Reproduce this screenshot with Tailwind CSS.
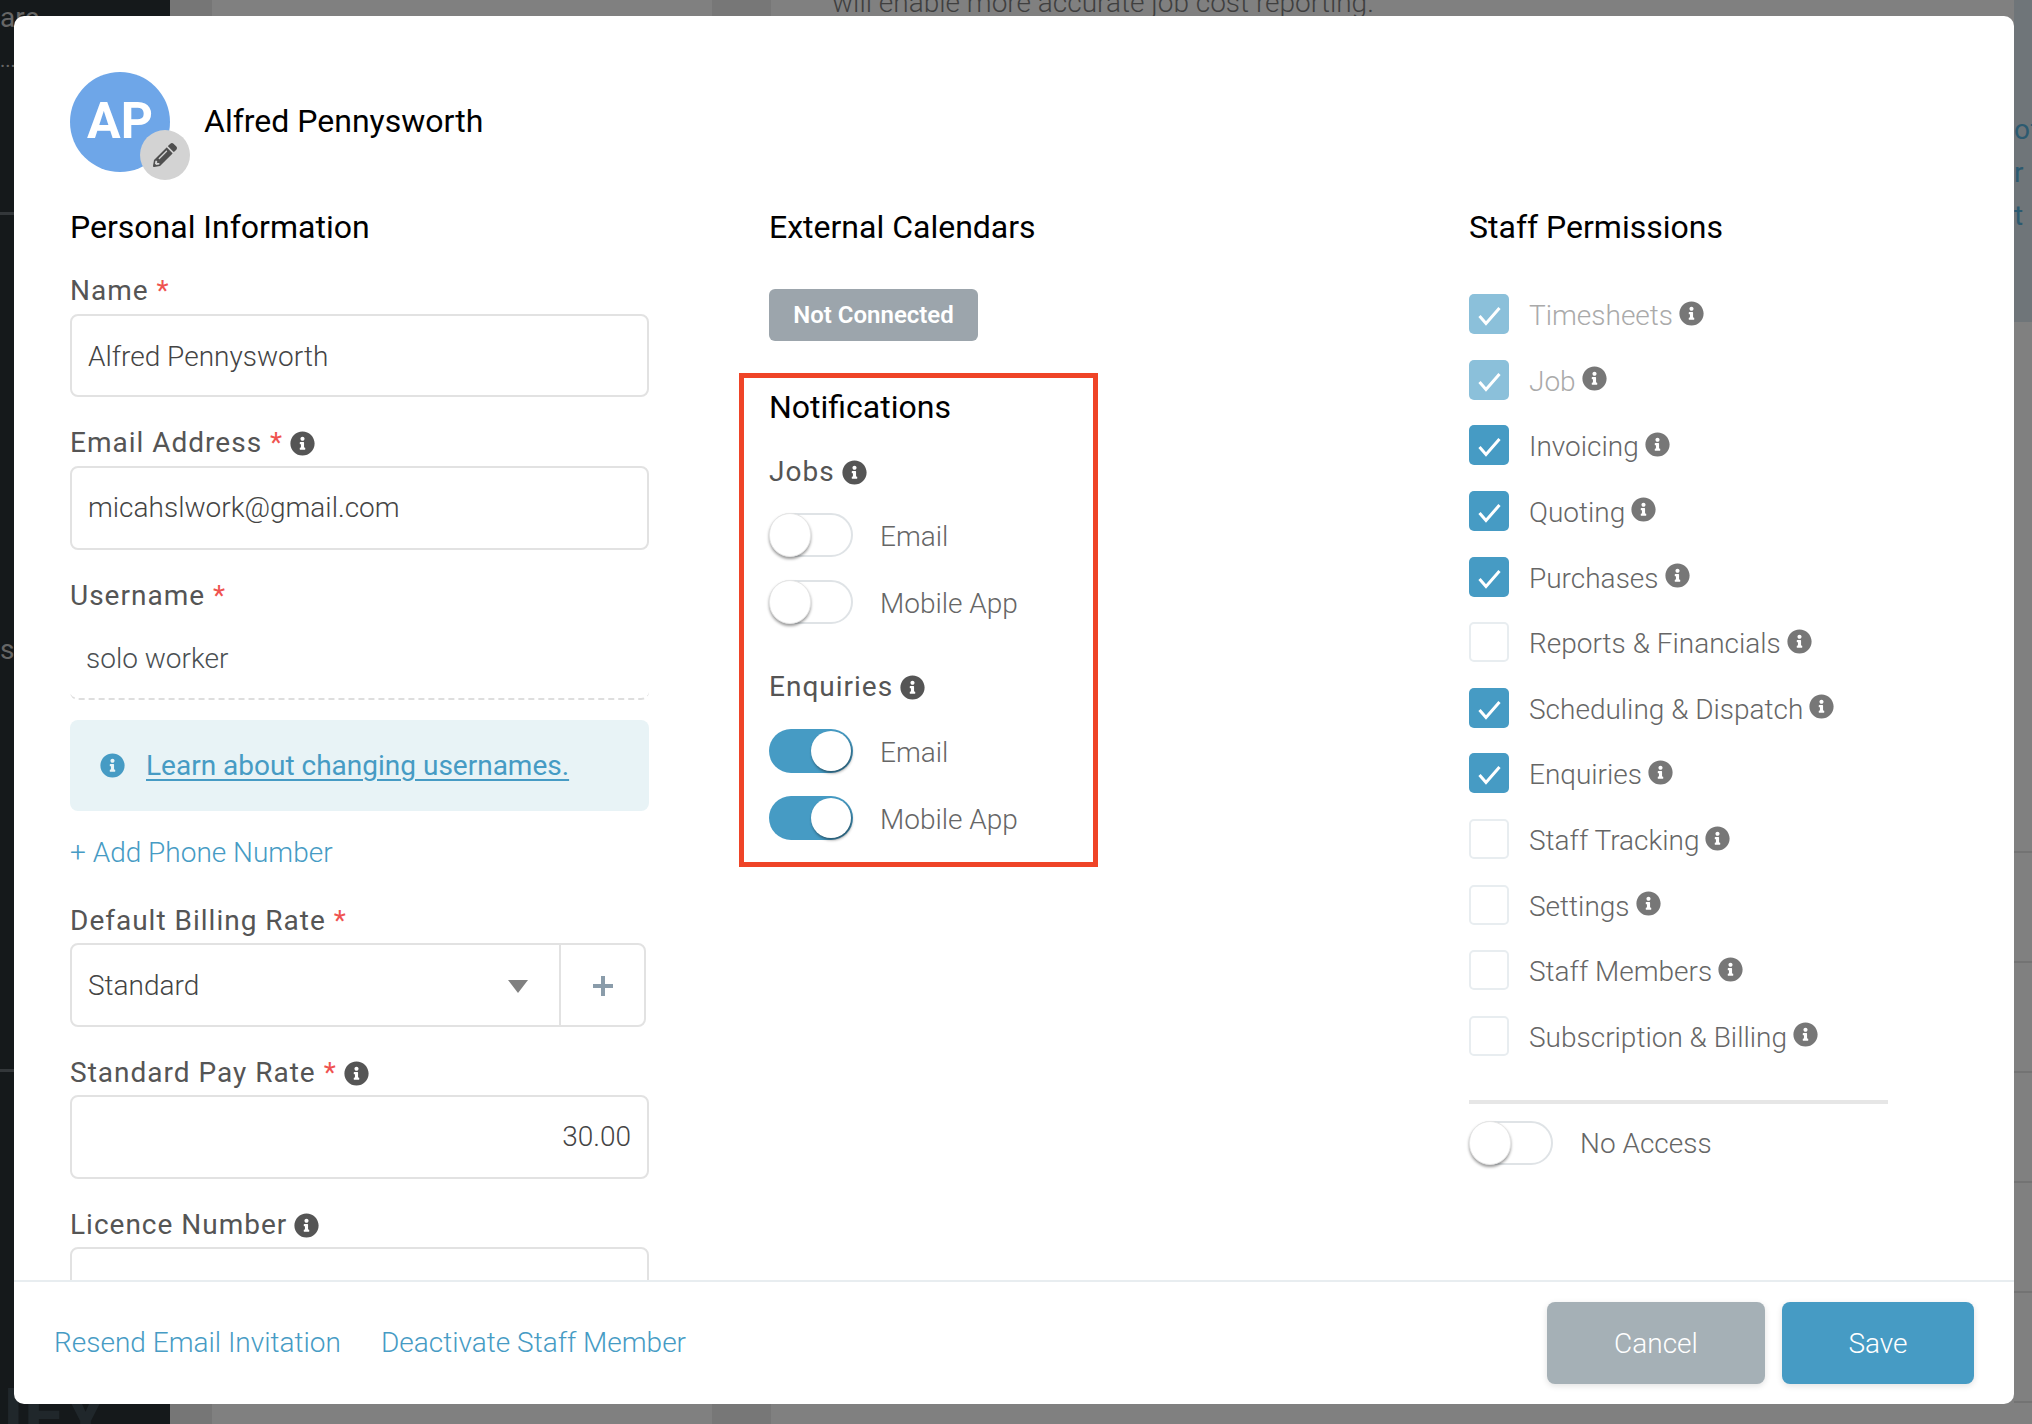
<!doctype html>
<html>
<head>
<meta charset="utf-8">
<script src="https://cdn.jsdelivr.net/npm/@tailwindcss/browser@4"></script>
</head>
<body class="m-0 overflow-hidden font-['Roboto',sans-serif]">
<svg class="hidden"><symbol id="i" viewBox="0 0 512 512"><path d="M256 8C119 8 8 119 8 256s111 248 248 248 248-111 248-248S393 8 256 8zm0 110c23.196 0 42 18.804 42 42s-18.804 42-42 42-42-18.804-42-42 18.804-42 42-42zm56 254c0 6.627-5.373 12-12 12h-88c-6.627 0-12-5.373-12-12v-24c0-6.627 5.373-12 12-12h12v-64h-12c-6.627 0-12-5.373-12-12v-24c0-6.627 5.373-12 12-12h64c6.627 0 12 5.373 12 12v100h12c6.627 0 12 5.373 12 12v24z"/></symbol><symbol id="c" viewBox="0 0 40 40"><path d="M10.5 22l6.5 7.5L30.5 14" fill="none" stroke="#fff" stroke-width="3"/></symbol></svg>

<div class="relative w-[2032px] h-[1424px] flex bg-[#808080] overflow-hidden">
  <div class="w-[170px] h-full bg-[#15191b] text-[#666] text-[28px] relative overflow-hidden">
    <span class="absolute left-0 top-[2px] leading-[32px]">are</span>
    <span class="absolute left-0 top-[44px] leading-[32px] text-[20px]">...</span>
    <div class="absolute left-0 top-[212px] w-full h-[3px] bg-[#33373a]"></div>
    <span class="absolute left-0 top-[634px] leading-[32px]">s</span>
    <div class="absolute left-0 top-[1069px] w-full h-[3px] bg-[#33373a]"></div>
    <span class="absolute left-[-44px] top-[1376px] text-[72px] leading-[80px] font-bold text-[#20272b] whitespace-nowrap">DIFY</span>
  </div>
  <div class="w-[42px] h-full bg-[#767676]"></div>
  <div class="w-[500px] h-full"></div>
  <div class="w-[59px] h-full bg-[#777777]"></div>
  <div class="flex-1 h-full relative overflow-hidden"><p class="absolute left-[61px] top-[-13px] text-[28px] leading-[32px] font-light text-[#3f3f3f] whitespace-nowrap">will enable more accurate job cost reporting.</p>
    <div class="absolute right-0 top-0 w-[18px] h-[322px] bg-[#6f7579]"></div>
    <div class="absolute left-[1243px] top-[108px] text-[28px] leading-[43px] text-[#2c5a70] whitespace-nowrap">of<br>r l<br>t L</div>
    <div class="absolute left-[1243px] top-[851px] w-[18px] h-[2px] bg-[#737373]"></div>
    <div class="absolute left-[1243px] top-[961px] w-[18px] h-[2px] bg-[#737373]"></div>
    <div class="absolute left-[1243px] top-[1071px] w-[18px] h-[2px] bg-[#737373]"></div>
    <div class="absolute left-[1243px] top-[1181px] w-[18px] h-[2px] bg-[#737373]"></div>
    <div class="absolute left-[1243px] top-[1291px] w-[18px] h-[2px] bg-[#737373]"></div>
    <div class="absolute left-[1243px] top-[1401px] w-[18px] h-[2px] bg-[#737373]"></div>
  </div>

  <div class="absolute left-[14px] top-[16px] w-[2000px] h-[1388px] bg-white rounded-[10px] flex flex-col overflow-hidden">
    <div class="flex-1 min-h-0 overflow-hidden pl-[56px] pt-[56px]">
      <div class="flex items-start">
        <div class="relative w-[100px] h-[100px] rounded-full bg-[#6ea6e8] flex items-center justify-center text-white text-[50px] font-bold leading-none pb-[2px]">AP
          <div class="absolute left-[70px] top-[58px] w-[50px] h-[50px] rounded-full bg-[#d3d3d3] flex items-center justify-center">
            <svg width="24" height="24" viewBox="0 0 512 512" fill="#4f4f4f"><path d="M497.9 142.1l-46.1 46.1c-4.7 4.7-12.3 4.7-17 0l-111-111c-4.7-4.7-4.7-12.3 0-17l46.1-46.1c18.7-18.7 49.1-18.7 67.9 0l60.1 60.1c18.8 18.7 18.8 49.1 0 67.9zM284.2 99.8L21.6 362.4.4 483.9c-2.9 16.4 11.4 30.6 27.8 27.8l121.5-21.3 262.6-262.6c4.7-4.7 4.7-12.3 0-17l-111-111c-4.8-4.7-12.4-4.7-17.1 0zM124.1 339.9c-5.5-5.5-5.5-14.3 0-19.8l154-154c5.5-5.5 14.3-5.5 19.8 0s5.5 14.3 0 19.8l-154 154c-5.5 5.5-14.3 5.5-19.8 0zM88 424h48v36.3l-64.5 11.3-31.1-31.1L51.7 376H88v48z"/></svg>
          </div>
        </div>
        <div class="ml-[34px] mt-[29px] text-[32px] leading-[40px] text-black">Alfred Pennysworth</div>
      </div>

      <div class="flex mt-[35px]">
        <!-- left -->
        <div class="w-[579px] shrink-0">
          <h2 class="text-[32px] leading-[40px] text-black">Personal Information</h2>
          <div class="mt-[26px] text-[28px] leading-[36px] tracking-[1px] text-[#555]">Name <span class="text-[#ef5350]">*</span></div>
          <div class="mt-[5px] h-[83px] border-2 border-[#e2e2e2] rounded-[8px] px-[16px] pt-[2px] flex items-center text-[28px] font-light text-[#444]">Alfred Pennysworth</div>
          <div class="mt-[28px] text-[28px] leading-[36px] tracking-[1px] text-[#555] flex items-center">Email Address <span class="text-[#ef5350] ml-[8px]">*</span><svg class="ml-[7px] w-[25px] h-[25px] fill-[#555]"><use href="#i"/></svg></div>
          <div class="mt-[5px] h-[84px] border-2 border-[#e2e2e2] rounded-[8px] px-[16px] flex items-center text-[28px] font-light text-[#444]">micahslwork@gmail.com</div>
          <div class="mt-[28px] text-[28px] leading-[36px] tracking-[1px] text-[#555]">Username <span class="text-[#ef5350]">*</span></div>
          <div class="mt-[6px] h-[80px] border-b-2 border-dashed border-[#dedede] rounded-b-[8px] px-[16px] flex items-center text-[28px] font-light text-[#4a4f52]">solo worker</div>
          <div class="mt-[20px] h-[91px] bg-[#e8f3f6] rounded-[8px] flex items-center pl-[30px]">
            <svg class="w-[25px] h-[25px] fill-[#469bc4] mr-[21px]"><use href="#i"/></svg>
            <a class="text-[28px] text-[#469bc4] underline underline-offset-[4px] decoration-2">Learn about changing usernames.</a>
          </div>
          <div class="mt-[22px] text-[28px] leading-[40px] font-light text-[#469bc4]">+ Add Phone Number</div>
          <div class="mt-[30px] text-[28px] leading-[36px] tracking-[1px] text-[#555]">Default Billing Rate <span class="text-[#ef5350]">*</span></div>
          <div class="mt-[4px] w-[576px] h-[84px] border-2 border-[#e2e2e2] rounded-[8px] flex">
            <div class="w-[489px] border-r-2 border-[#e2e2e2] pl-[16px] pr-[31px] flex items-center justify-between text-[28px] font-light text-[#444]"><span class="mt-[1px]">Standard</span><span class="mt-[3px] w-0 h-0 border-x-[10px] border-x-transparent border-t-[13px] border-t-[#808080]"></span></div>
            <div class="flex-1 flex items-center justify-center"><svg class="mt-[2px]" width="20" height="20" viewBox="0 0 20 20"><path d="M8 0h4v8h8v4h-8v8H8v-8H0V8h8z" fill="#8a9caa"/></svg></div>
          </div>
          <div class="mt-[28px] text-[28px] leading-[36px] tracking-[1px] text-[#555] flex items-center">Standard Pay Rate <span class="text-[#ef5350] ml-[8px]">*</span><svg class="ml-[7px] w-[25px] h-[25px] fill-[#555]"><use href="#i"/></svg></div>
          <div class="mt-[4px] h-[84px] border-2 border-[#e2e2e2] rounded-[8px] px-[16px] flex items-center justify-end text-[28px] font-light text-[#444]">30.00</div>
          <div class="mt-[28px] text-[28px] leading-[36px] tracking-[1px] text-[#555] flex items-center">Licence Number<svg class="ml-[7px] w-[25px] h-[25px] fill-[#555]"><use href="#i"/></svg></div>
          <div class="mt-[4px] h-[84px] border-2 border-[#e2e2e2] rounded-[8px]"></div>
        </div>

        <!-- middle -->
        <div class="w-[820px] shrink-0 pl-[120px]">
          <h2 class="text-[32px] leading-[40px] text-black">External Calendars</h2>
          <div class="mt-[42px] w-[209px] h-[52px] bg-[#9ca5ac] rounded-[6px] flex items-center justify-center text-white text-[24px] font-semibold">Not Connected</div>
          <div class="-ml-[30px] mt-[32px] w-[359px] h-[494px] border-[5px] border-[#ef4427] pl-[25px] pt-[9px]">
            <h2 class="text-[32px] leading-[40px] text-black">Notifications</h2>
            <div class="mt-[27px] text-[28px] leading-[36px] tracking-[1px] text-[#555] flex items-center">Jobs<svg class="ml-[7px] w-[25px] h-[25px] fill-[#555]"><use href="#i"/></svg></div>
            <div class="mt-[23px] flex items-center h-[44px] text-[28px] font-light text-[#666]"><span class="w-[84px] h-[44px] rounded-full border-2 border-[#dfe3e6] bg-white relative shrink-0"><span class="absolute left-[-2px] top-[-2px] w-[42px] h-[44px] rounded-full bg-white shadow-[0_2px_3px_rgba(0,0,0,0.4)] border border-[#e6e6e6]"></span></span><span class="ml-[27px] mt-[4px]">Email</span></div>
            <div class="mt-[23px] flex items-center h-[44px] text-[28px] font-light text-[#666]"><span class="w-[84px] h-[44px] rounded-full border-2 border-[#dfe3e6] bg-white relative shrink-0"><span class="absolute left-[-2px] top-[-2px] w-[42px] h-[44px] rounded-full bg-white shadow-[0_2px_3px_rgba(0,0,0,0.4)] border border-[#e6e6e6]"></span></span><span class="ml-[27px] mt-[4px]">Mobile App</span></div>
            <div class="mt-[45px] text-[28px] leading-[36px] tracking-[1px] text-[#555] flex items-center">Enquiries<svg class="ml-[7px] w-[25px] h-[25px] fill-[#555]"><use href="#i"/></svg></div>
            <div class="mt-[24px] flex items-center h-[44px] text-[28px] font-light text-[#666]"><span class="w-[84px] h-[44px] rounded-full bg-[#469bc4] relative shrink-0"><span class="absolute right-[2px] top-[2px] w-[40px] h-[40px] rounded-full bg-white shadow-[1px_2px_3px_rgba(0,0,0,0.45)]"></span></span><span class="ml-[27px] mt-[4px]">Email</span></div>
            <div class="mt-[23px] flex items-center h-[44px] text-[28px] font-light text-[#666]"><span class="w-[84px] h-[44px] rounded-full bg-[#469bc4] relative shrink-0"><span class="absolute right-[2px] top-[2px] w-[40px] h-[40px] rounded-full bg-white shadow-[1px_2px_3px_rgba(0,0,0,0.45)]"></span></span><span class="ml-[27px] mt-[3px]">Mobile App</span></div>
          </div>
        </div>

        <!-- right -->
        <div class="flex-1">
          <h2 class="text-[32px] leading-[40px] text-black">Staff Permissions</h2>
          <div class="mt-[47px] grid auto-rows-[40px] gap-y-[25.64px] text-[28px] font-light text-[#666]">
            <div class="flex items-center"><span class="w-[40px] h-[40px] rounded-[5px] bg-[#8bc0da] shrink-0"><svg class="w-[40px] h-[40px]"><use href="#c"/></svg></span><span class="ml-[20px] mt-[4px] text-[#aaa]">Timesheets</span><svg class="ml-[6px] -mt-[2px] w-[25px] h-[25px] fill-[#777]"><use href="#i"/></svg></div>
            <div class="flex items-center"><span class="w-[40px] h-[40px] rounded-[5px] bg-[#8bc0da] shrink-0"><svg class="w-[40px] h-[40px]"><use href="#c"/></svg></span><span class="ml-[20px] mt-[4px] text-[#aaa]">Job</span><svg class="ml-[6px] -mt-[2px] w-[25px] h-[25px] fill-[#777]"><use href="#i"/></svg></div>
            <div class="flex items-center"><span class="w-[40px] h-[40px] rounded-[5px] bg-[#469bc4] shrink-0"><svg class="w-[40px] h-[40px]"><use href="#c"/></svg></span><span class="ml-[20px] mt-[4px]">Invoicing</span><svg class="ml-[6px] -mt-[2px] w-[25px] h-[25px] fill-[#777]"><use href="#i"/></svg></div>
            <div class="flex items-center"><span class="w-[40px] h-[40px] rounded-[5px] bg-[#469bc4] shrink-0"><svg class="w-[40px] h-[40px]"><use href="#c"/></svg></span><span class="ml-[20px] mt-[4px]">Quoting</span><svg class="ml-[6px] -mt-[2px] w-[25px] h-[25px] fill-[#777]"><use href="#i"/></svg></div>
            <div class="flex items-center"><span class="w-[40px] h-[40px] rounded-[5px] bg-[#469bc4] shrink-0"><svg class="w-[40px] h-[40px]"><use href="#c"/></svg></span><span class="ml-[20px] mt-[4px]">Purchases</span><svg class="ml-[6px] -mt-[2px] w-[25px] h-[25px] fill-[#777]"><use href="#i"/></svg></div>
            <div class="flex items-center"><span class="w-[40px] h-[40px] rounded-[5px] border-2 border-[#e8edf0] shrink-0"></span><span class="ml-[20px] mt-[4px]">Reports &amp; Financials</span><svg class="ml-[6px] -mt-[2px] w-[25px] h-[25px] fill-[#777]"><use href="#i"/></svg></div>
            <div class="flex items-center"><span class="w-[40px] h-[40px] rounded-[5px] bg-[#469bc4] shrink-0"><svg class="w-[40px] h-[40px]"><use href="#c"/></svg></span><span class="ml-[20px] mt-[4px]">Scheduling &amp; Dispatch</span><svg class="ml-[6px] -mt-[2px] w-[25px] h-[25px] fill-[#777]"><use href="#i"/></svg></div>
            <div class="flex items-center"><span class="w-[40px] h-[40px] rounded-[5px] bg-[#469bc4] shrink-0"><svg class="w-[40px] h-[40px]"><use href="#c"/></svg></span><span class="ml-[20px] mt-[4px]">Enquiries</span><svg class="ml-[6px] -mt-[2px] w-[25px] h-[25px] fill-[#777]"><use href="#i"/></svg></div>
            <div class="flex items-center"><span class="w-[40px] h-[40px] rounded-[5px] border-2 border-[#e8edf0] shrink-0"></span><span class="ml-[20px] mt-[4px]">Staff Tracking</span><svg class="ml-[6px] -mt-[2px] w-[25px] h-[25px] fill-[#777]"><use href="#i"/></svg></div>
            <div class="flex items-center"><span class="w-[40px] h-[40px] rounded-[5px] border-2 border-[#e8edf0] shrink-0"></span><span class="ml-[20px] mt-[4px]">Settings</span><svg class="ml-[6px] -mt-[2px] w-[25px] h-[25px] fill-[#777]"><use href="#i"/></svg></div>
            <div class="flex items-center"><span class="w-[40px] h-[40px] rounded-[5px] border-2 border-[#e8edf0] shrink-0"></span><span class="ml-[20px] mt-[4px]">Staff Members</span><svg class="ml-[6px] -mt-[2px] w-[25px] h-[25px] fill-[#777]"><use href="#i"/></svg></div>
            <div class="flex items-center"><span class="w-[40px] h-[40px] rounded-[5px] border-2 border-[#e8edf0] shrink-0"></span><span class="ml-[20px] mt-[4px]">Subscription &amp; Billing</span><svg class="ml-[6px] -mt-[2px] w-[25px] h-[25px] fill-[#777]"><use href="#i"/></svg></div>
          </div>
          <div class="mt-[44px] w-[419px] h-[4px] bg-[#e6e6e6]"></div>
          <div class="mt-[17px] flex items-center h-[44px] text-[28px] font-light text-[#666]"><span class="w-[84px] h-[44px] rounded-full border-2 border-[#dfe3e6] bg-white relative shrink-0"><span class="absolute left-[-2px] top-[-2px] w-[42px] h-[44px] rounded-full bg-white shadow-[0_2px_3px_rgba(0,0,0,0.4)] border border-[#e6e6e6]"></span></span><span class="ml-[27px] mt-[2px]">No Access</span></div>
        </div>
      </div>
    </div>
    <div class="h-[124px] shrink-0 border-t-2 border-[#e8edf0] flex items-center pl-[40px] pr-[40px] text-[28px] font-light text-[#469bc4]">
      <a>Resend Email Invitation</a><a class="ml-[40px]">Deactivate Staff Member</a>
      <div class="ml-auto flex gap-[17px] text-white">
        <div class="w-[218px] h-[82px] rounded-[8px] bg-[#a5b0b6] shadow-[0_2px_6px_rgba(0,0,0,0.12)] flex items-center justify-center pt-[1px]">Cancel</div>
        <div class="w-[192px] h-[82px] rounded-[8px] bg-[#469bc4] shadow-[0_2px_6px_rgba(0,0,0,0.12)] flex items-center justify-center pt-[1px]">Save</div>
      </div>
    </div>
  </div>
</div>
</body>
</html>
